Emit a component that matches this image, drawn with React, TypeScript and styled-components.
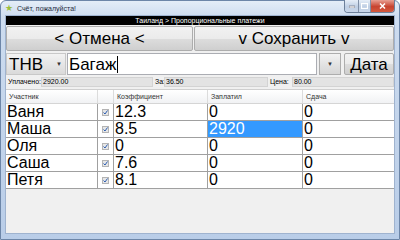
import React from 'react'
import styled, { createGlobalStyle } from 'styled-components'

const GlobalStyle = createGlobalStyle`
  html, body {
    margin: 0;
    padding: 0;
    width: 400px;
    height: 240px;
    overflow: hidden;
    background: #fff;
  }
  * {
    box-sizing: border-box;
  }
`

const Window = styled.div`
  width: 400px;
  height: 240px;
  display: flex;
  flex-direction: column;
  padding: 0 4px 5px 4px;
  background: linear-gradient(180deg, #e4edf7 0px, #cddcef 16px, #b9cde8 100%);
  border: 1px solid #6d86a8;
  border-radius: 6px 6px 0 0;
  font-family: 'Liberation Sans', Arial, sans-serif;
`

const TitleBar = styled.div`
  height: 14px;
  display: flex;
  align-items: center;
  gap: 4px;
`

const AppIcon = styled.span`
  width: 8px;
  height: 8px;
  color: #9cbf3a;
  font-size: 9px;
  line-height: 8px;
`

const Title = styled.span`
  flex: 1;
  font-size: 7px;
  color: #1e2a3a;
`

const Controls = styled.div`
  display: flex;
  align-self: flex-start;
  margin-top: -1px;
  border: 1px solid #6c7f99;
  border-top: none;
  border-radius: 0 0 4px 4px;
  overflow: hidden;
`

const Ctl = styled.div<{ $w: number; $close?: boolean }>`
  width: ${(p) => p.$w}px;
  height: 12px;
  display: flex;
  align-items: center;
  justify-content: center;
  background: ${(p) =>
    p.$close
      ? 'linear-gradient(180deg, #e8a093 0%, #c7432f 55%, #d45a3f 100%)'
      : 'linear-gradient(180deg, #e6eef8 0%, #bfcfe4 55%, #c8d6ea 100%)'};
  & + & {
    border-left: 1px solid #7f8fa6;
  }
`

const Client = styled.div`
  flex: 1;
  display: flex;
  flex-direction: column;
  background: #f0f0f0;
  border: 1px solid #9fb3cf;
  overflow: hidden;
`

const Crumb = styled.div`
  height: 9px;
  background: #000;
  color: #fff;
  font-size: 7px;
  line-height: 9px;
  text-align: center;
`

const ButtonRow = styled.div`
  display: grid;
  grid-template-columns: 187px 1fr;
  gap: 1px;
  margin-top: 1px;
  height: 25px;
`

const BigButton = styled.div`
  display: flex;
  align-items: center;
  justify-content: center;
  font-size: 17px;
  line-height: 1;
  color: #000;
  border: 1px solid #adadad;
  border-radius: 2px;
  background: linear-gradient(180deg, #f2f2f2 0%, #ebebeb 50%, #dddddd 51%, #cfcfcf 100%);
`

const InputRow = styled.div`
  display: flex;
  height: 22px;
  margin-top: 2px;
  gap: 1px;
`

const Combo = styled.div`
  width: 60px;
  display: flex;
  align-items: center;
  justify-content: space-between;
  padding: 0 3px 0 2px;
  font-size: 17px;
  line-height: 1;
  background: linear-gradient(180deg, #f2f2f2 0%, #e6e6e6 50%, #dadada 100%);
  border: 1px solid #c8c8c8;
`

const Arrow = styled.span`
  font-size: 6px;
  color: #333;
`

const TextBox = styled.div`
  flex: 1;
  display: flex;
  align-items: center;
  padding-left: 1px;
  font-size: 17px;
  line-height: 1;
  background: #fff;
  border: 1px solid #abadb3;
`

const Caret = styled.span`
  width: 1px;
  height: 17px;
  background: #000;
  margin-left: 1px;
`

const DropButton = styled.div`
  width: 22px;
  margin-left: 1px;
  display: flex;
  align-items: center;
  justify-content: center;
  border: 1px solid #adadad;
  background: linear-gradient(180deg, #f2f2f2 0%, #e3e3e3 50%, #d6d6d6 100%);
`

const SmallButton = styled(BigButton)`
  width: 50px;
  margin-left: 2px;
`

const InfoRow = styled.div`
  display: flex;
  height: 10px;
  margin-top: 2px;
  font-size: 7px;
  color: #000;
`

const InfoCell = styled.div<{ $w: number; $box?: boolean }>`
  width: ${(p) => p.$w}px;
  padding-left: 1px;
  background: ${(p) => (p.$box ? '#e3e3e3' : 'transparent')};
  border: 1px solid ${(p) => (p.$box ? '#d3d3d3' : 'transparent')};
  line-height: 8px;
  white-space: nowrap;
`

const Table = styled.div`
  flex: 1;
  margin-top: 2px;
  display: flex;
  flex-direction: column;
  border-top: 1px solid #cfcfcf;
`

const Row = styled.div<{ $head?: boolean }>`
  display: grid;
  grid-template-columns: 92px 16px 94px 95px 1fr;
  height: ${(p) => (p.$head ? 14 : 17)}px;
  background: ${(p) => (p.$head ? 'linear-gradient(180deg, #ffffff, #f1f2f4)' : '#fff')};
  border-bottom: 1px solid ${(p) => (p.$head ? '#d5d5d5' : '#a0a0a0')};
`

const Cell = styled.div<{ $head?: boolean; $sel?: boolean }>`
  display: flex;
  align-items: center;
  padding-left: ${(p) => (p.$head ? 3 : 1)}px;
  font-size: ${(p) => (p.$head ? 7 : 16)}px;
  line-height: 1;
  color: ${(p) => (p.$head ? '#333' : p.$sel ? '#fff' : '#000')};
  background: ${(p) => (p.$sel ? '#3399ff' : 'transparent')};
  border-right: 1px solid ${(p) => (p.$head ? '#dcdcdc' : '#a0a0a0')};
  white-space: nowrap;
  &:last-child {
    border-right: none;
  }
`

const CheckCell = styled(Cell)`
  justify-content: center;
  padding-left: 0;
`

const Check = styled.span`
  width: 7px;
  height: 7px;
  border: 1px solid #b4b4b4;
  background: #e6e6e6;
  display: flex;
  align-items: center;
  justify-content: center;
`

const rows = [
  { name: 'Ваня', k: '12.3', paid: '0', change: '0' },
  { name: 'Маша', k: '8.5', paid: '2920', change: '0', sel: true },
  { name: 'Оля', k: '0', paid: '0', change: '0' },
  { name: 'Саша', k: '7.6', paid: '0', change: '0' },
  { name: 'Петя', k: '8.1', paid: '0', change: '0' },
]

export default function App() {
  return (
    <>
      <GlobalStyle />
      <Window>
        <TitleBar>
          <AppIcon>★</AppIcon>
          <Title>Счёт, пожалуйста!</Title>
          <Controls>
            <Ctl $w={13}>
              <svg width="6" height="3"><rect width="6" height="2" y="1" fill="#fff" stroke="#445" strokeWidth="0.5" /></svg>
            </Ctl>
            <Ctl $w={12}>
              <svg width="7" height="6"><rect x="0.5" y="0.5" width="6" height="5" fill="none" stroke="#fff" strokeWidth="1.2" /></svg>
            </Ctl>
            <Ctl $w={24} $close>
              <svg width="7" height="6"><path d="M1 0.5 L6 5.5 M6 0.5 L1 5.5" stroke="#fff" strokeWidth="1.5" /></svg>
            </Ctl>
          </Controls>
        </TitleBar>
        <Client>
          <Crumb>Таиланд &gt; Пропорциональные платежи</Crumb>
          <ButtonRow>
            <BigButton>&lt; Отмена &lt;</BigButton>
            <BigButton>v Сохранить v</BigButton>
          </ButtonRow>
          <InputRow>
            <Combo>
              THB
              <Arrow>▼</Arrow>
            </Combo>
            <TextBox>
              Багаж
              <Caret />
            </TextBox>
            <DropButton>
              <Arrow>▼</Arrow>
            </DropButton>
            <SmallButton>Дата</SmallButton>
          </InputRow>
          <InfoRow>
            <InfoCell $w={35}>Уплачено:</InfoCell>
            <InfoCell $w={112} $box>2920.00</InfoCell>
            <InfoCell $w={11}>За:</InfoCell>
            <InfoCell $w={104} $box>36.50</InfoCell>
            <InfoCell $w={24}>Цена:</InfoCell>
            <InfoCell $w={102} $box>80.00</InfoCell>
          </InfoRow>
          <Table>
            <Row $head>
              <Cell $head>Участник</Cell>
              <Cell $head />
              <Cell $head>Коэффициент</Cell>
              <Cell $head>Заплатил</Cell>
              <Cell $head>Сдача</Cell>
            </Row>
            {rows.map((r) => (
              <Row key={r.name}>
                <Cell>{r.name}</Cell>
                <CheckCell>
                  <Check>
                    <svg width="5" height="5">
                      <path d="M0.5 2.5 L2 4 L4.5 0.5" stroke="#2a5db0" strokeWidth="1" fill="none" />
                    </svg>
                  </Check>
                </CheckCell>
                <Cell>{r.k}</Cell>
                <Cell $sel={r.sel}>{r.paid}</Cell>
                <Cell>{r.change}</Cell>
              </Row>
            ))}
          </Table>
        </Client>
      </Window>
    </>
  )
}
